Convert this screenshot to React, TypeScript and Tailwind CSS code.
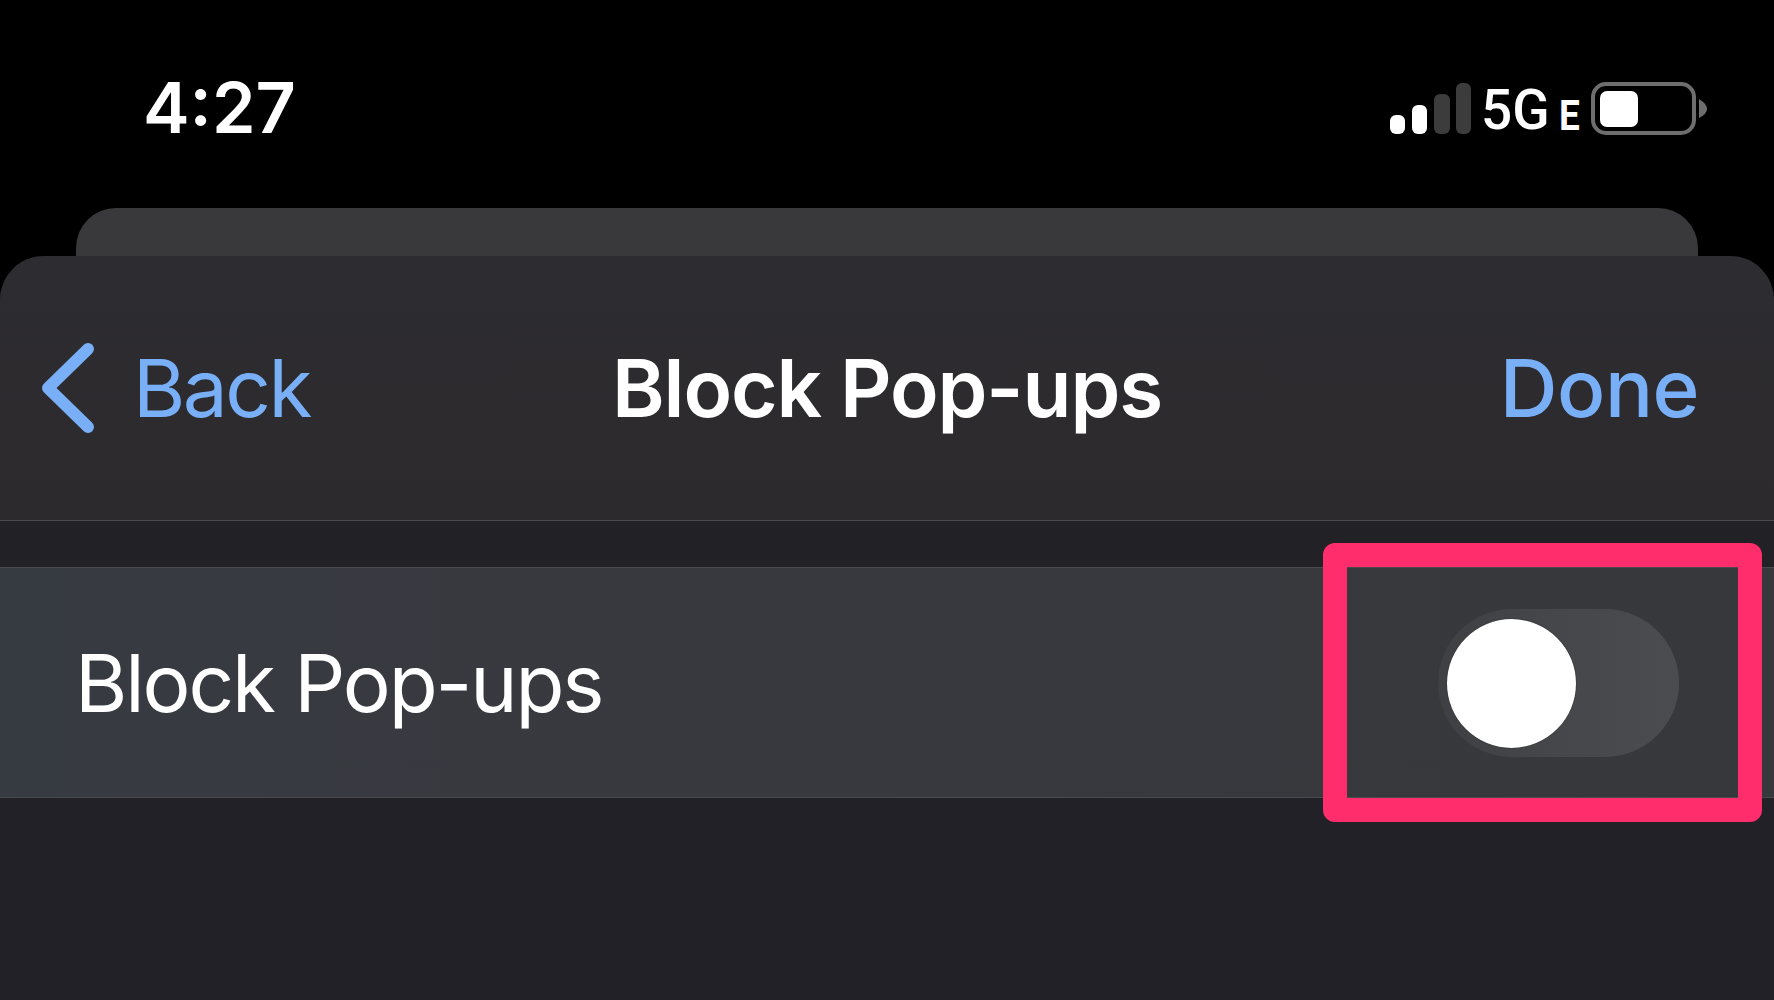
import React from 'react';

const SignalBars = () => (
  <svg width="81" height="51" viewBox="0 0 81 51" className="shrink-0">
    <rect x="0" y="32" width="15" height="19" rx="6" fill="#ffffff" />
    <rect x="22" y="22" width="15" height="29" rx="6" fill="#ffffff" />
    <rect x="44" y="11" width="16" height="40" rx="6" fill="#3c3c3c" />
    <rect x="66" y="0" width="15" height="51" rx="6" fill="#3c3c3c" />
  </svg>
);

const Battery = () => (
  <svg width="116" height="53" viewBox="0 0 116 53" className="shrink-0">
    <rect x="2" y="2" width="101" height="49" rx="13" fill="none" stroke="#6e6e6e" strokeWidth="4" />
    <rect x="9" y="9" width="38" height="36" rx="7" fill="#ffffff" />
    <path d="M108 17 Q116 22 116 27 Q116 32 108 36 Z" fill="#6e6e6e" />
  </svg>
);

const App: React.FC = () => {
  return (
    <div className="w-[1774px] h-[1000px] overflow-hidden bg-black flex flex-col font-['Inter','Liberation_Sans',sans-serif]">
      <div className="h-[208px] shrink-0 flex items-start justify-between pl-[143px] pr-[67px]">
        <div className="mt-[66px] text-[70px] leading-[84px] font-semibold text-white">4:27</div>
        <div className="mt-[83px] flex items-start">
          <SignalBars />
          <div className="ml-[10px] w-[65px] mt-[-3px] text-[56px] leading-[60px] font-medium text-white font-['Roboto',sans-serif]">
            <span className="inline-block origin-left scale-x-[0.98]">5G</span>
          </div>
          <div className="ml-[13px] w-[20px] mt-[9px] text-[42px] leading-[48px] font-bold text-white font-['Roboto',sans-serif]">
            <span className="inline-block origin-left scale-x-[0.88]">E</span>
          </div>
          <div className="ml-[12px] mt-[-1px]">
            <Battery />
          </div>
        </div>
      </div>

      <div className="mx-[76px] h-[48px] shrink-0 rounded-t-[40px] bg-[#39393b]" />

      <div className="relative flex-1 flex flex-col rounded-t-[44px] bg-[#212127] overflow-hidden">
        <div className="h-[264px] shrink-0 flex items-center bg-gradient-to-b from-[#2d2c30] to-[#2c2a2d] px-[42px]">
          <div className="flex-1 flex items-center text-[#79aff7]">
            <svg width="54" height="92" viewBox="0 0 54 92" className="mt-[2px] shrink-0">
              <path d="M46 6 L6 45 L46 84" fill="none" stroke="#79aff7" strokeWidth="12" strokeLinecap="round" strokeLinejoin="round" />
            </svg>
            <span className="ml-[37px] text-[80px] leading-none font-normal tracking-[-2.5px]">Back</span>
          </div>
          <div className="text-[80px] leading-none font-semibold tracking-[-1.1px] text-white">Block Pop-ups</div>
          <div className="flex-1 flex justify-end">
            <span className="mr-[33px] text-[80px] leading-none font-medium tracking-[-0.5px] text-[#79aff7]">Done</span>
          </div>
        </div>

        <div className="h-[47px] shrink-0 border-t border-t-[#4a4a4c] bg-[#212126]" />

        <div className="h-[231px] shrink-0 flex items-center justify-between border-y border-y-[#4a4a4e] bg-gradient-to-r from-[#353b41] via-[#383a41] via-10% to-[#37383b] pt-[1px] pl-[75px] pr-[95px]">
          <span className="text-[80px] leading-none tracking-[-2.1px] text-white">Block Pop-ups</span>
          <div className="w-[241px] h-[148px] rounded-full bg-gradient-to-r from-[#3f4044] via-[#46474b] to-[#4b4c50] flex items-center pl-[9px]">
            <div className="w-[129px] h-[129px] rounded-full bg-white shadow-[0_0_1px_#111]" />
          </div>
        </div>

        {/* pink callout around the switch */}
        <div className="absolute left-[1323px] top-[287px] w-[439px] h-[279px] rounded-[12px] border-[24px] border-[#ff2d6c]" />
      </div>
    </div>
  );
};

export default App;
